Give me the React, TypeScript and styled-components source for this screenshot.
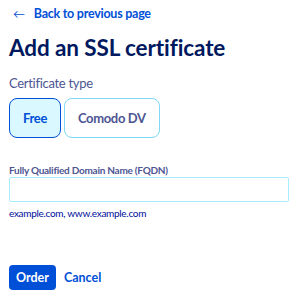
import React from "react";
import styled, { createGlobalStyle } from "styled-components";

const Global = createGlobalStyle`
  html, body { margin: 0; padding: 0; background: #fff; }
  body { font-family: Lato, "Noto Sans", sans-serif; -webkit-font-smoothing: antialiased; }
  * { box-sizing: border-box; }
`;

const Page = styled.div`
  padding: 5px 7px 0 9px;
  display: flex;
  flex-direction: column;
`;

const BackLink = styled.a`
  display: flex;
  align-items: center;
  gap: 9px;
  padding-left: 4px;
  color: #0050d7;
  font-weight: 700;
  font-size: 12.5px;
  letter-spacing: -0.25px;
  line-height: 18px;
  text-decoration: none;
`;

const Arrow = styled.span`
  font-size: 12px;
  font-weight: 400;
`;

const Title = styled.h1`
  margin: 10px 0 0;
  color: #00185e;
  font-size: 22.5px;
  letter-spacing: -0.1px;
  font-weight: 700;
  line-height: 30px;
`;

const Label = styled.div`
  margin-top: 11px;
  color: #4d5592;
  font-size: 13px;
  letter-spacing: -0.3px;
  line-height: 18px;
`;

const Tiles = styled.div`
  margin-top: 6px;
  display: flex;
  gap: 3px;
`;

const Tile = styled.button<{ $selected?: boolean }>`
  height: 40px;
  padding: 0 13px;
  border-radius: 8px;
  border: 1px solid ${(p) => (p.$selected ? "#0050d7" : "#7fd8f5")};
  background: ${(p) => (p.$selected ? "#d9f8ff" : "#fff")};
  color: ${(p) => (p.$selected ? "#0050d7" : "#4d5592")};
  font-family: inherit;
  font-weight: 700;
  font-size: 13px;
  letter-spacing: -0.35px;
  cursor: pointer;
`;

const FieldLabel = styled.label`
  margin-top: 26px;
  color: #4d5592;
  font-weight: 700;
  font-size: 10px;
  letter-spacing: -0.25px;
  line-height: 12px;
`;

const Input = styled.input`
  margin-top: 1px;
  width: 280px;
  height: 25px;
  border: 1px solid #a8ecff;
  border-radius: 2px;
  outline: none;
`;

const Helper = styled.div`
  margin-top: 4px;
  color: #000e9c;
  font-size: 10px;
  letter-spacing: -0.3px;
  line-height: 14px;
`;

const Actions = styled.div`
  margin-top: 45px;
  display: flex;
  align-items: center;
  gap: 8px;
`;

const Primary = styled.button`
  height: 25px;
  padding: 0 7px;
  border: none;
  border-radius: 4px;
  background: #0050d7;
  color: #fff;
  font-family: inherit;
  font-weight: 700;
  font-size: 12.5px;
`;

const Ghost = styled.button`
  border: none;
  background: none;
  padding: 0;
  color: #0050d7;
  font-family: inherit;
  font-weight: 700;
  font-size: 12.5px;
`;

export default function App() {
  return (
    <>
      <Global />
      <Page>
        <BackLink href="#">
          <Arrow>←</Arrow>
          Back to previous page
        </BackLink>
        <Title>Add an SSL certificate</Title>
        <Label>Certificate type</Label>
        <Tiles>
          <Tile $selected>Free</Tile>
          <Tile>Comodo DV</Tile>
        </Tiles>
        <FieldLabel>Fully Qualified Domain Name (FQDN)</FieldLabel>
        <Input />
        <Helper>example.com, www.example.com</Helper>
        <Actions>
          <Primary>Order</Primary>
          <Ghost>Cancel</Ghost>
        </Actions>
      </Page>
    </>
  );
}
